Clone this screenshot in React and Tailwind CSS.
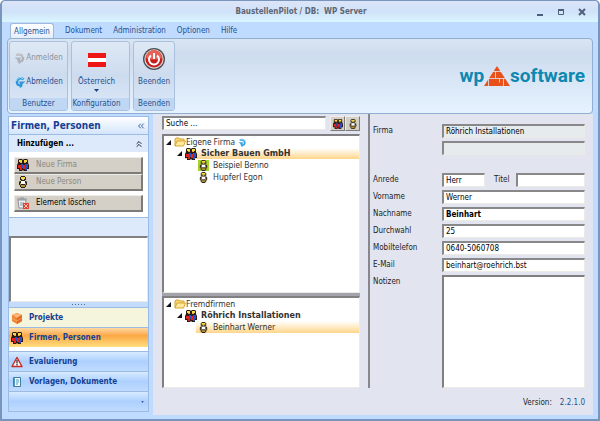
import React from 'react';
import { ChevronsLeft, ChevronsUp } from 'lucide-react';

const INPUT =
  'h-[14px] w-full min-w-0 rounded-none border-t-2 border-l-2 border-r border-b border-t-[#88888b] border-l-[#88888b] border-r-[#eceae5] border-b-[#eceae5] px-[2px] text-[8px] leading-[10px] text-black outline-none';

const SUNKEN =
  'border-t-2 border-l-2 border-r border-b border-t-[#808083] border-l-[#808083] border-r-[#eceae5] border-b-[#eceae5] bg-white';

const RAISED =
  'border-t border-l border-t-[#efede9] border-l-[#efede9] border-r-[#7d7b77] border-b-[#7d7b77] bg-[#d4d0c8]';

/* Icons */

const PersonIcon = ({ className = 'h-3 w-3' }) => (
  <svg viewBox="0 0 12 12" className={className} aria-hidden="true">
    <path d="M4 0h4v1h1v3H8v1h1l1 1v3H9v2H8v1H4v-1H3V9H2V6l1-1h1V4H3V1h1z" fill="#2a2418" />
    <path d="M4 1h4v2H4z" fill="#f4dc3c" />
    <path d="M5 3h2v1H5z" fill="#f3c48e" />
    <path d="M4 5h4v3H4z" fill="#fff" />
    <path d="M3 7h1v2H3zM8 7h1v2H8zM4 9h4v2H4z" fill="#b3923a" />
  </svg>
);

const GroupIcon = ({ className = 'h-3 w-3' }) => (
  <svg viewBox="0 0 12 12" className={className} aria-hidden="true">
    <path d="M2 0h3l1 1 1-1h3l1 1v3l1 2v4h-2v2H7l-1-1-1 1H2v-2H0V6l1-2V1z" fill="#2a1a14" />
    <path d="M2 1h3v2H2zM7 1h3v2H7z" fill="#f4dc3c" />
    <path d="M3 3h2v1H3zM7 3h2v1H7z" fill="#e8a860" />
    <path d="M1 6h3v3H1zM6 6h2v4H6zM3 9h2v2H3z" fill="#e6221c" />
    <path d="M4 5h2v4H4zM8 5h3v4H8zM8 9h2v2H8z" fill="#2450cc" />
  </svg>
);

const FolderIcon = () => (
  <svg viewBox="0 0 12 10" className="h-[10px] w-3 shrink-0" aria-hidden="true">
    <path d="M1 9V2l1-1h3l1 1h4v2" fill="#f7d774" stroke="#d9a534" />
    <path d="M1 9l2-5h8.500l-2 5z" fill="#fdeaa0" stroke="#d9a534" strokeLinejoin="round" />
  </svg>
);

const TurnIcon = ({ color, light, flip, className = 'h-3 w-3' }) => (
  <svg viewBox="0 0 12 12" className={`shrink-0 ${className} ${flip ? '-scale-x-100' : ''}`} aria-hidden="true">
    <path d="M9.500 3.500A3.800 3.800 0 1 0 5 9.500" fill="none" stroke={color} strokeWidth="2.500" />
    <path d="M9 2.800A4 4 0 0 0 2.200 5" fill="none" stroke={light} />
    <path d="M5 5.500h6.500L8.500 8v2L6.500 12 4 9l2-1z" fill={color} />
  </svg>
);

const TrashIcon = () => (
  <svg viewBox="0 0 12 12" className="h-3 w-3" aria-hidden="true">
    <path d="M1 3h8l-1 8H2z" fill="#eef1f4" stroke="#8b939c" />
    <path d="M0 2h10M3 1h4M4 5v4M6 5v4" stroke="#8b939c" />
    <path d="M6 6h6v6H6z" fill="#e2432f" />
    <path d="M7 7l4 4M11 7l-4 4" stroke="#fbc0b4" />
  </svg>
);

const BoxIcon = () => (
  <svg viewBox="0 0 12 12" className="h-3 w-3" aria-hidden="true">
    <path d="M6 1l5 2v6l-5 3-5-3V3z" fill="#ef8436" />
    <path d="M6 1l5 2-5 3-5-3z" fill="#f9ac6c" />
    <path d="M6 6v6l5-3V3z" fill="#e2681c" />
    <path d="M1 6l5 3 5-3M3 2l5 3M9 2L4 5" stroke="#fbc496" strokeWidth=".5" fill="none" />
  </svg>
);

const WarningIcon = () => (
  <svg viewBox="0 0 12 12" className="h-3 w-3" aria-hidden="true">
    <path d="M6 1.500L11 10.500H1z" fill="#fff" stroke="#cf2b25" strokeWidth="1.500" strokeLinejoin="round" />
    <path d="M6 4v3.500M6 8v1.500" stroke="#222" strokeWidth="1.200" />
  </svg>
);

const DocumentIcon = () => (
  <svg viewBox="0 0 12 12" className="h-3 w-3" aria-hidden="true">
    <path d="M2.500 1.500h7v9h-7z" fill="#f4fbff" stroke="#3c7f9f" />
    <path d="M5 4h3M5 6h3M5 8h2M3.500 1.500v9" stroke="#4d9bbd" />
  </svg>
);

const PowerIcon = () => (
  <svg viewBox="0 0 24 24" className="h-6 w-6" aria-hidden="true">
    <circle cx="12" cy="12" r="11" fill="#4e4e50" />
    <circle cx="12" cy="12" r="9.700" fill="#d5d5d7" />
    <circle cx="12" cy="12" r="8.500" fill="#c81d1a" />
    <path d="M4 11a8 8 0 0 1 16 0c-4 2-12 2-16 0z" fill="#e66257" />
    <path d="M9 8.500a5 5 0 1 0 6 0" fill="none" stroke="#fff" strokeWidth="2" />
    <path d="M12 6v6" stroke="#fff" strokeWidth="2" />
  </svg>
);

const PyramidLogo = () => (
  <svg viewBox="0 0 26 20" className="h-5 w-[26px]" aria-hidden="true">
    <path d="M13 0l13 20H0z" fill="#e8521a" />
    <path d="M8 5.500h10M4 12.500h18M11.500 5v7.500M4.500 12.500V20M15.500 12.500v4M19.500 12.500V20" stroke="#dfe9f6" strokeWidth=".8" />
  </svg>
);

const Expander = () => (
  <svg viewBox="0 0 6 6" className="h-[5px] w-[5px] shrink-0" aria-hidden="true">
    <path d="M6 0v6H0z" fill="#111" />
  </svg>
);

/* Window parts */

const TitleBar = () => (
  <header className="flex h-[21px] items-center rounded-t-[4px] bg-linear-to-b from-[#dde4f8] via-[#cfe2f9] to-[#dbf6ff] pr-[10px] pl-3">
    <div className="flex-1" />
    <h1 className="text-[8px] leading-3 font-bold whitespace-pre text-[#5f6673]">BaustellenPilot / DB:  WP Server</h1>
    <div className="flex flex-1 justify-end gap-[13px] text-[#4f5f7b]">
      <button aria-label="Minimieren">
        <svg viewBox="0 0 8 8" className="h-2 w-2"><path d="M1 6h6v2H1z" fill="currentColor" /></svg>
      </button>
      <button aria-label="Maximieren">
        <svg viewBox="0 0 8 8" className="h-2 w-2">
          <path d="M1.500 1.500h5v5h-5z" fill="none" stroke="currentColor" />
          <path d="M1 1h6v2H1z" fill="currentColor" />
        </svg>
      </button>
      <button aria-label="Schließen" className="mr-[2px]">
        <svg viewBox="0 0 8 8" className="h-2 w-2"><path d="M1 1l6 6M7 1L1 7" stroke="currentColor" strokeWidth="2" /></svg>
      </button>
    </div>
  </header>
);

const tabs = ['Dokument', 'Administration', 'Optionen', 'Hilfe'];

const Tabs = () => (
  <nav className="flex h-4 items-end gap-[11px] pl-[3px] text-[8px] leading-[14px] text-[#27508f]">
    <button className="-mb-px h-4 rounded-t-[3px] border border-b-0 border-[#9fb9da] bg-linear-to-b from-white to-[#e2edfa] px-[3px]">Allgemein</button>
    {tabs.map((tab) => (
      <button key={tab}>{tab}</button>
    ))}
  </nav>
);

const RibbonGroup = ({ label, className, inset = '', children }) => (
  <section className={`flex flex-col overflow-hidden rounded-[3px] border border-[#a9c1de] bg-linear-to-b from-[#dfe9f5] via-[#ccdbee] to-[#dbe9fa] ${className}`}>
    <div className={`flex flex-1 flex-col items-center ${inset}`}>{children}</div>
    <h2 className={`h-3 bg-[#bfd7f3] text-center leading-3 ${inset}`}>{label}</h2>
  </section>
);

const Ribbon = () => (
  <div className="flex h-[76px] items-center rounded-[4px] border border-[#91aed0] bg-linear-to-b from-[#dae5f2] via-[#cddcee] via-20% to-[#e6f2ff] pr-[7px] pl-px text-[8px] text-[#27508f]">
    <div className="flex h-[70px] gap-[3px]">
      <RibbonGroup label="Benutzer" className="w-[59px]">
        <div className="flex h-full flex-col justify-around py-1">
          <button disabled className="flex items-center text-[#8c9199]">
            <TurnIcon color="#b0b3b9" light="#dddfe3" flip />
            Anmelden
          </button>
          <button className="flex items-center">
            <TurnIcon color="#2f98dd" light="#a8e0fa" />
            Abmelden
          </button>
        </div>
      </RibbonGroup>
      <RibbonGroup label="Konfiguration" className="w-[59px]" inset="pr-2">
        <button className="flex flex-col items-center pt-[11px]">
          <svg viewBox="0 0 18 14" className="h-[14px] w-[18px]" aria-hidden="true">
            <path d="M0 0h18v14H0z" fill="#fff" />
            <path d="M0 0h18v5H0zM0 9h18v5H0z" fill="#ee1515" />
          </svg>
          <span className="mt-[9px] leading-3">Österreich</span>
          <svg viewBox="0 0 5 3" className="mt-px h-[3px] w-[5px]" aria-hidden="true"><path d="M0 0h5L2.500 3z" fill="#1f4386" /></svg>
        </button>
      </RibbonGroup>
      <RibbonGroup label="Beenden" className="w-[42px]">
        <button className="flex flex-col items-center pt-[5px]">
          <PowerIcon />
          <span className="mt-[5px] leading-3">Beenden</span>
        </button>
      </RibbonGroup>
    </div>
    <div className="ml-auto flex items-center font-['Roboto',sans-serif] text-[19px] leading-5 font-bold text-[#0c88b1]">
      wp
      <PyramidLogo />
      software
    </div>
  </div>
);

const navItems = [
  { label: 'Projekte', icon: BoxIcon, className: 'h-5 bg-[#f5f4dc]' },
  { label: 'Firmen, Personen', icon: GroupIcon, className: 'mb-1 h-5 bg-linear-to-b from-[#fdd9a0] via-[#fba743] via-40% to-[#fede7e]' },
  { label: 'Evaluierung', icon: WarningIcon, className: 'h-5 bg-linear-to-b from-[#d8eaff] via-[#add0ff] to-[#c0dbff]' },
  { label: 'Vorlagen, Dokumente', icon: DocumentIcon, className: 'h-5 bg-linear-to-b from-[#d8eaff] via-[#add0ff] to-[#c0dbff]' },
];

const SideButton = ({ icon: Icon, label, ...rest }) => (
  <button className={`flex h-[17px] w-full items-center gap-[7px] border-r-2 border-b-2 pl-[2px] text-[8px] text-black disabled:text-[#8b8882] ${RAISED}`} {...rest}>
    <Icon />
    {label}
  </button>
);

const Sidebar = () => (
  <aside className="flex w-[141px] shrink-0 flex-col border border-[#9bbbe3] bg-white">
    <div className="flex h-[18px] items-center justify-between border-b border-[#9bbbe3] bg-linear-to-b from-white to-[#d3e5fb] px-[2px] text-[#163f94]">
      <h2 className="text-[10px] font-bold">Firmen, Personen</h2>
      <button aria-label="Einklappen"><ChevronsLeft size={10} /></button>
    </div>
    <div className="flex h-[17px] items-center justify-between bg-[#dceafc] pr-1 pl-2 text-black">
      <h3 className="text-[8px] font-bold">Hinzufügen ...</h3>
      <button aria-label="Gruppe schließen"><ChevronsUp size={10} /></button>
    </div>
    <div className="border-b border-[#9bbbe3] p-[5px]">
      <SideButton icon={GroupIcon} label="Neue Firma" disabled />
      <SideButton icon={PersonIcon} label="Neue Person" disabled />
      <div className="pt-1">
        <SideButton icon={TrashIcon} label="Element löschen" />
      </div>
    </div>
    <div className="h-[18px] bg-[#dceafc]" />
    <div className={`min-h-0 flex-1 ${SUNKEN}`} />
    <div className="flex h-[5px] items-center justify-center gap-[2px] bg-[#c3dcfb]">
      {[0, 1, 2, 3, 4].map((dot) => (
        <span key={dot} className="h-px w-px bg-[#4d6d9f]" />
      ))}
    </div>
    <nav>
      {navItems.map(({ label, icon: Icon, className }) => (
        <button key={label} className={`flex w-full items-center gap-[6px] border-t border-[#9bbbe3] pl-[2px] text-[8px] font-bold text-[#163f94] ${className}`}>
          <Icon />
          {label}
        </button>
      ))}
      <div className="flex h-5 items-center justify-end border-t border-[#9bbbe3] bg-linear-to-b from-[#d8eaff] via-[#add0ff] to-[#c0dbff] pr-1">
        <svg viewBox="0 0 4 3" className="h-[2px] w-[3px]" aria-hidden="true"><path d="M0 0h4L2 3z" fill="#2c58a8" /></svg>
      </div>
    </nav>
  </aside>
);

const HIGHLIGHT = 'bg-linear-to-b from-white to-[#ffd588]';

const PersonRow = ({ name, selected, marked }) => (
  <li className={`ml-[32px] flex h-3 items-center gap-1 pl-[2px] ${selected ? HIGHLIGHT : ''}`}>
    <PersonIcon className={`h-[11px] w-[11px] ${marked ? 'bg-[#a5d32c]' : ''}`} />
    {name}
  </li>
);

const Tree = ({ root, company, people, selected, refresh, className }) => (
  <div className={`font-['Noto_Sans',sans-serif] text-[8px] leading-3 text-[#333] ${SUNKEN} ${className}`}>
    <div className="flex h-3 items-center gap-[3px] pl-[2px]">
      <Expander />
      <div className="flex items-center">
        <FolderIcon />
        {root}
      </div>
      {refresh && <TurnIcon color="#3aa5e6" light="#b6e5fb" flip className="h-[9px] w-[9px]" />}
    </div>
    <div className="flex h-[11px] items-center gap-[3px] pl-[13px]">
      <Expander />
      <div className={`flex h-full flex-1 items-center gap-1 font-['DejaVu_Sans',sans-serif] font-bold ${selected === company ? HIGHLIGHT : ''}`}>
        <GroupIcon />
        {company}
      </div>
    </div>
    <ul>
      {people.map((p) => (
        <PersonRow key={p.name} name={p.name} marked={p.marked} selected={selected === p.name} />
      ))}
    </ul>
  </div>
);

const Explorer = () => (
  <section className="flex w-[198px] shrink-0 flex-col">
    <div className="mb-[3px] flex gap-1">
      <input aria-label="Suche" defaultValue="Suche ..." className={`${INPUT} flex-1 bg-white`} />
      <div className="flex">
        <button aria-label="Firmen" className={`flex h-[15px] w-[15px] items-center justify-center border-r border-b ${RAISED}`}><GroupIcon className="h-[10px] w-[10px]" /></button>
        <button aria-label="Personen" className={`flex h-[15px] w-[15px] items-center justify-center border-r border-b ${RAISED}`}><PersonIcon className="h-[10px] w-[10px]" /></button>
      </div>
    </div>
    <Tree
      root="Eigene Firma"
      company="Sicher Bauen GmbH"
      people={[{ name: 'Beispiel Benno', marked: true }, { name: 'Hupferl Egon' }]}
      selected="Sicher Bauen GmbH"
      refresh
      className="flex-1"
    />
    <div className="h-[3px] bg-[#a3a3ab]" />
    <Tree
      root="Fremdfirmen"
      company="Röhrich Installationen"
      people={[{ name: 'Beinhart Werner' }]}
      selected="Beinhart Werner"
      className="h-[92px]"
    />
  </section>
);

const fields = [
  { id: 'vorname', label: 'Vorname', value: 'Werner' },
  { id: 'nachname', label: 'Nachname', value: 'Beinhart', bold: true },
  { id: 'durchwahl', label: 'Durchwahl', value: '25' },
  { id: 'mobil', label: 'Mobiltelefon', value: '0640-5060708' },
  { id: 'email', label: 'E-Mail', value: 'beinhart@roehrich.bst' },
];

const ContactForm = () => (
  <form className="grid min-w-0 flex-1 grid-cols-[69px_1fr] grid-rows-[14px_14px_12px_repeat(6,14px)_1fr] gap-y-[3px] text-[8px] leading-[14px] text-[#222]">
    <label htmlFor="firma">Firma</label>
    <input id="firma" readOnly value="Röhrich Installationen" className={`${INPUT} bg-[#e6ebee]`} />
    <input aria-label="Firma Zusatz" readOnly value="" className={`${INPUT} col-start-2 bg-[#e6ebee]`} />
    <div className="col-span-2" />
    <label htmlFor="anrede">Anrede</label>
    <div className="flex">
      <div className="w-[43px] shrink-0">
        <input id="anrede" defaultValue="Herr" className={`${INPUT} bg-white`} />
      </div>
      <label htmlFor="titel" className="w-[31px] shrink-0 pl-[9px]">Titel</label>
      <input id="titel" className={`${INPUT} bg-white`} />
    </div>
    {fields.map((f) => (
      <React.Fragment key={f.id}>
        <label htmlFor={f.id}>{f.label}</label>
        <input id={f.id} defaultValue={f.value} className={`${INPUT} bg-white ${f.bold ? 'font-bold' : ''}`} />
      </React.Fragment>
    ))}
    <label htmlFor="notizen">Notizen</label>
    <textarea id="notizen" className={`block w-full resize-none outline-none ${SUNKEN}`} />
  </form>
);

const App = () => (
  <div className="flex min-h-screen flex-col rounded-t-[5px] border-x-2 border-t border-b-2 border-[#7895bd] bg-[#bfdbff] font-['DejaVu_Sans_Condensed','DejaVu_Sans',sans-serif]">
    <TitleBar />
    <div className="flex flex-1 flex-col px-[5px] pb-1">
      <Tabs />
      <Ribbon />
      <div className="flex flex-1">
        <div className="flex pt-[2px] pr-1 pb-[3px] pl-px">
          <Sidebar />
        </div>
        <main className="flex min-w-0 flex-1 flex-col bg-[#e2e5ef] pr-2 pl-[9px]">
          <div className="flex flex-1">
            <div className="flex pt-[2px] pr-2">
              <Explorer />
            </div>
            <div className="flex min-w-0 flex-1 border-l-2 border-[#88888c] pt-[10px] pl-[3px]">
              <ContactForm />
            </div>
          </div>
          <footer className="flex h-[27px] items-center justify-end gap-2 pt-[3px] text-[8px] text-[#222]">
            <span>Version:</span>
            <span className="text-[#27508f]">2.2.1.0</span>
          </footer>
        </main>
      </div>
    </div>
  </div>
);

export default App;
